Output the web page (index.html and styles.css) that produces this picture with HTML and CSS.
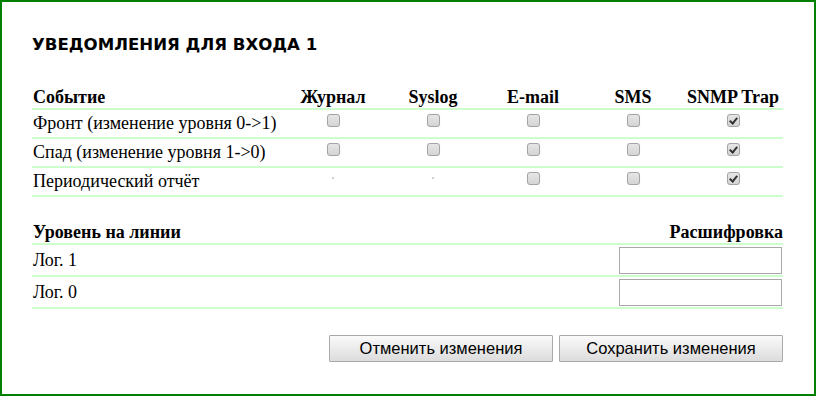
FILE: index.html
```html
<!doctype html>
<html lang="ru">
  <head>
    <meta charset="UTF-8" />
    <title>Уведомления для входа 1</title>
    <link rel="stylesheet" href="styles.css">
  </head>
  <body>
    <div class="frame">
      <h1 class="title">УВЕДОМЛЕНИЯ ДЛЯ ВХОДА 1</h1>

      <table class="grid events">
        <thead>
          <tr>
            <th class="name">Событие</th>
            <th>Журнал</th>
            <th>Syslog</th>
            <th>E-mail</th>
            <th>SMS</th>
            <th>SNMP Trap</th>
          </tr>
        </thead>
        <tbody>
          <tr>
            <td class="name">Фронт (изменение уровня 0-&gt;1)</td>
            <td><input type="checkbox" class="check" /></td>
            <td><input type="checkbox" class="check" /></td>
            <td><input type="checkbox" class="check" /></td>
            <td><input type="checkbox" class="check" /></td>
            <td><input type="checkbox" class="check" checked /></td>
          </tr>
          <tr>
            <td class="name">Спад (изменение уровня 1-&gt;0)</td>
            <td><input type="checkbox" class="check" /></td>
            <td><input type="checkbox" class="check" /></td>
            <td><input type="checkbox" class="check" /></td>
            <td><input type="checkbox" class="check" /></td>
            <td><input type="checkbox" class="check" checked /></td>
          </tr>
          <tr>
            <td class="name">Периодический отчёт</td>
            <td><span class="dot"></span></td>
            <td><span class="dot"></span></td>
            <td><input type="checkbox" class="check" /></td>
            <td><input type="checkbox" class="check" /></td>
            <td><input type="checkbox" class="check" checked /></td>
          </tr>
        </tbody>
      </table>

      <table class="grid levels">
        <thead>
          <tr>
            <th class="name">Уровень на линии</th>
            <th class="decode">Расшифровка</th>
          </tr>
        </thead>
        <tbody>
          <tr>
            <td class="name">Лог. 1</td>
            <td class="decode"><input type="text" class="field" /></td>
          </tr>
          <tr>
            <td class="name">Лог. 0</td>
            <td class="decode"><input type="text" class="field" /></td>
          </tr>
        </tbody>
      </table>

      <div class="actions">
        <button class="btn">Отменить изменения</button>
        <button class="btn">Сохранить изменения</button>
      </div>
    </div>
  </body>
</html>
```

FILE: styles.css
```css
html,
body {
  margin: 0;
  padding: 0;
  background: #ffffff;
}

body {
  font-family: 'Liberation Serif', 'Times New Roman', serif;
  font-size: 18px;
  line-height: 21px;
  color: #000000;
}

.frame {
  box-sizing: border-box;
  height: 396px;
  border: 2px solid #008000;
  padding: 33px 0 0 30px;
}

.title {
  margin: 0 0 32px 0;
  font-family: 'DejaVu Sans', Verdana, sans-serif;
  font-size: 16.6px;
  line-height: 20px;
  font-weight: bold;
}

/* Tables */
.grid {
  width: 751px;
  border-collapse: collapse;
  table-layout: fixed;
}

.grid th,
.grid td {
  padding: 0;
  border-bottom: 2px solid #ccffcc;
  text-align: center;
  white-space: nowrap;
}

.grid th {
  height: 21px;
  vertical-align: bottom;
  font-weight: bold;
}

.grid td {
  height: 27px;
  vertical-align: middle;
}

.grid .name {
  text-align: left;
  padding-left: 1px;
}

.events th:not(.name) {
  width: 100px;
}

/* Checkboxes */
.check {
  appearance: none;
  -webkit-appearance: none;
  box-sizing: border-box;
  width: 13px;
  height: 13px;
  margin: 1px 0 0;
  vertical-align: top;
  position: relative;
  border: 1px solid #a4a4a4;
  border-radius: 3px;
  background: linear-gradient(#e6e6e6, #d4d4d4);
  box-shadow: 0 0 1px rgba(0, 0, 0, 0.15);
}

.check:checked::after {
  content: '';
  position: absolute;
  left: 3px;
  top: 1px;
  width: 3px;
  height: 6px;
  border: solid #333333;
  border-width: 0 2px 2px 0;
  transform: rotate(40deg);
}

.dot {
  display: inline-block;
  width: 2px;
  height: 2px;
  margin-top: 6px;
  vertical-align: top;
  background: #d0d0d0;
}

.levels {
  margin-top: 25px;
}

.levels .decode {
  width: 200px;
  text-align: right;
}

.levels td {
  height: 30px;
}

.levels td.decode {
  vertical-align: top;
}

.field {
  display: block;
  box-sizing: border-box;
  width: 163px;
  height: 27px;
  margin: 2px 1px 0 auto;
  border: 1px solid #a9a9a9;
  outline: none;
}

/* Buttons */
.actions {
  display: flex;
  justify-content: flex-end;
  gap: 6px;
  width: 751px;
  margin-top: 26px;
}

.btn {
  box-sizing: border-box;
  width: 224px;
  height: 27px;
  border: 1px solid #a9a9a9;
  border-radius: 1px;
  background: linear-gradient(#fafafa, #dcdcdc);
  font-family: 'Liberation Sans', Arial, sans-serif;
  font-size: 16.5px;
  color: #000000;
}
```
